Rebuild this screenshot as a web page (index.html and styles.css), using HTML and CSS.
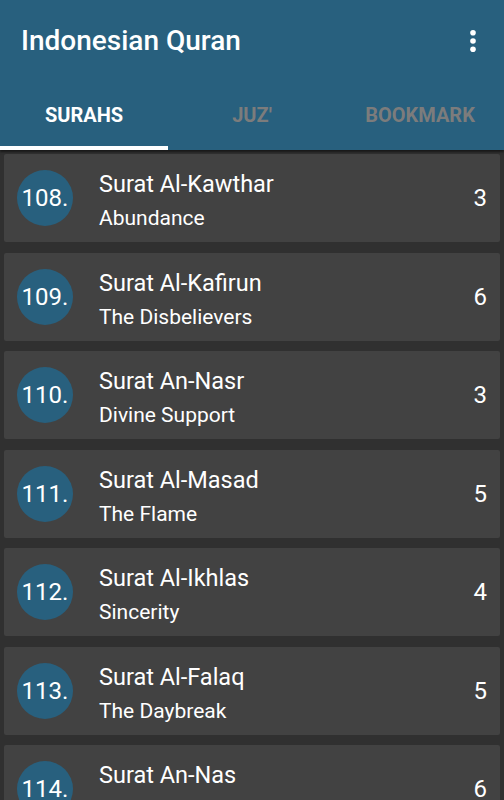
FILE: index.html
```html
<!DOCTYPE html>
<html lang="en">
<head>
    <meta charset="UTF-8">
    <meta name="viewport" content="width=device-width, initial-scale=1.0">
    <title>Indonesian Quran</title>
    <link rel="stylesheet" href="styles.css">
</head>
<body>
    <header class="app-bar">
        <div class="toolbar">
            <h1 class="app-title">Indonesian Quran</h1>
            <svg class="menu-icon" width="12" height="28" viewBox="0 0 12 28">
                <circle cx="6" cy="5.7" r="2.8" fill="#fff"/>
                <circle cx="6" cy="14" r="2.8" fill="#fff"/>
                <circle cx="6" cy="22.3" r="2.8" fill="#fff"/>
            </svg>
        </div>
        <nav class="tabs">
            <div class="tab active">SURAHS</div>
            <div class="tab">JUZ'</div>
            <div class="tab">BOOKMARK</div>
        </nav>
    </header>

    <main class="surah-list">
        <div class="surah-card">
            <div class="surah-num">108.</div>
            <div class="surah-text">
                <div class="surah-name">Surat Al-Kawthar</div>
                <div class="surah-meaning">Abundance</div>
            </div>
            <div class="surah-count">3</div>
        </div>
        <div class="surah-card">
            <div class="surah-num">109.</div>
            <div class="surah-text">
                <div class="surah-name">Surat Al-Kafirun</div>
                <div class="surah-meaning">The Disbelievers</div>
            </div>
            <div class="surah-count">6</div>
        </div>
        <div class="surah-card">
            <div class="surah-num">110.</div>
            <div class="surah-text">
                <div class="surah-name">Surat An-Nasr</div>
                <div class="surah-meaning">Divine Support</div>
            </div>
            <div class="surah-count">3</div>
        </div>
        <div class="surah-card">
            <div class="surah-num">111.</div>
            <div class="surah-text">
                <div class="surah-name">Surat Al-Masad</div>
                <div class="surah-meaning">The Flame</div>
            </div>
            <div class="surah-count">5</div>
        </div>
        <div class="surah-card">
            <div class="surah-num">112.</div>
            <div class="surah-text">
                <div class="surah-name">Surat Al-Ikhlas</div>
                <div class="surah-meaning">Sincerity</div>
            </div>
            <div class="surah-count">4</div>
        </div>
        <div class="surah-card">
            <div class="surah-num">113.</div>
            <div class="surah-text">
                <div class="surah-name">Surat Al-Falaq</div>
                <div class="surah-meaning">The Daybreak</div>
            </div>
            <div class="surah-count">5</div>
        </div>
        <div class="surah-card">
            <div class="surah-num">114.</div>
            <div class="surah-text">
                <div class="surah-name">Surat An-Nas</div>
                <div class="surah-meaning">Mankind</div>
            </div>
            <div class="surah-count">6</div>
        </div>
    </main>
</body>
</html>
```

FILE: styles.css
```css
html, body {
    height: 100%;
    overflow: hidden;
}
body {
    font-family: Roboto, "Noto Sans", sans-serif;
    margin: 0;
    padding: 0;
    background-color: #303030;
    color: #fff;
}
.app-bar {
    background-color: #28607e;
    box-shadow: 0 2px 2px rgba(0, 0, 0, 0.5);
    position: relative;
    z-index: 1;
}
.toolbar {
    height: 80px;
    box-sizing: border-box;
    display: flex;
    align-items: center;
    justify-content: space-between;
    padding: 1px 25px 0 21px;
}
.app-title {
    margin: 0;
    font-size: 28px;
    font-weight: 500;
    line-height: normal;
}
.menu-icon {
    display: block;
}
.tabs {
    height: 70px;
    display: flex;
}
.tab {
    flex: 1;
    display: flex;
    align-items: center;
    justify-content: center;
    font-size: 20px;
    font-weight: 700;
    color: #7c7c7c;
    box-sizing: border-box;
}
.tab.active {
    color: #fff;
    border-bottom: 4px solid #fff;
    padding-top: 4px;
}
.surah-list {
    padding: 4px 4px 0;
    display: flex;
    flex-direction: column;
    gap: 10.5px;
}
.surah-card {
    height: 88px;
    background-color: #424242;
    border-radius: 2px;
    display: flex;
    align-items: center;
    padding: 0 13px;
    flex-shrink: 0;
}
.surah-num {
    width: 56px;
    height: 56px;
    border-radius: 50%;
    background-color: #28607e;
    display: flex;
    align-items: center;
    justify-content: center;
    font-size: 24px;
    flex-shrink: 0;
}
.surah-text {
    flex: 1;
    align-self: flex-start;
    padding: 16px 0 0 26px;
}
.surah-name {
    font-size: 23.5px;
    line-height: 28px;
}
.surah-meaning {
    font-size: 21px;
    line-height: 24px;
    margin-top: 8px;
}
.surah-count {
    font-size: 24px;
}
```
